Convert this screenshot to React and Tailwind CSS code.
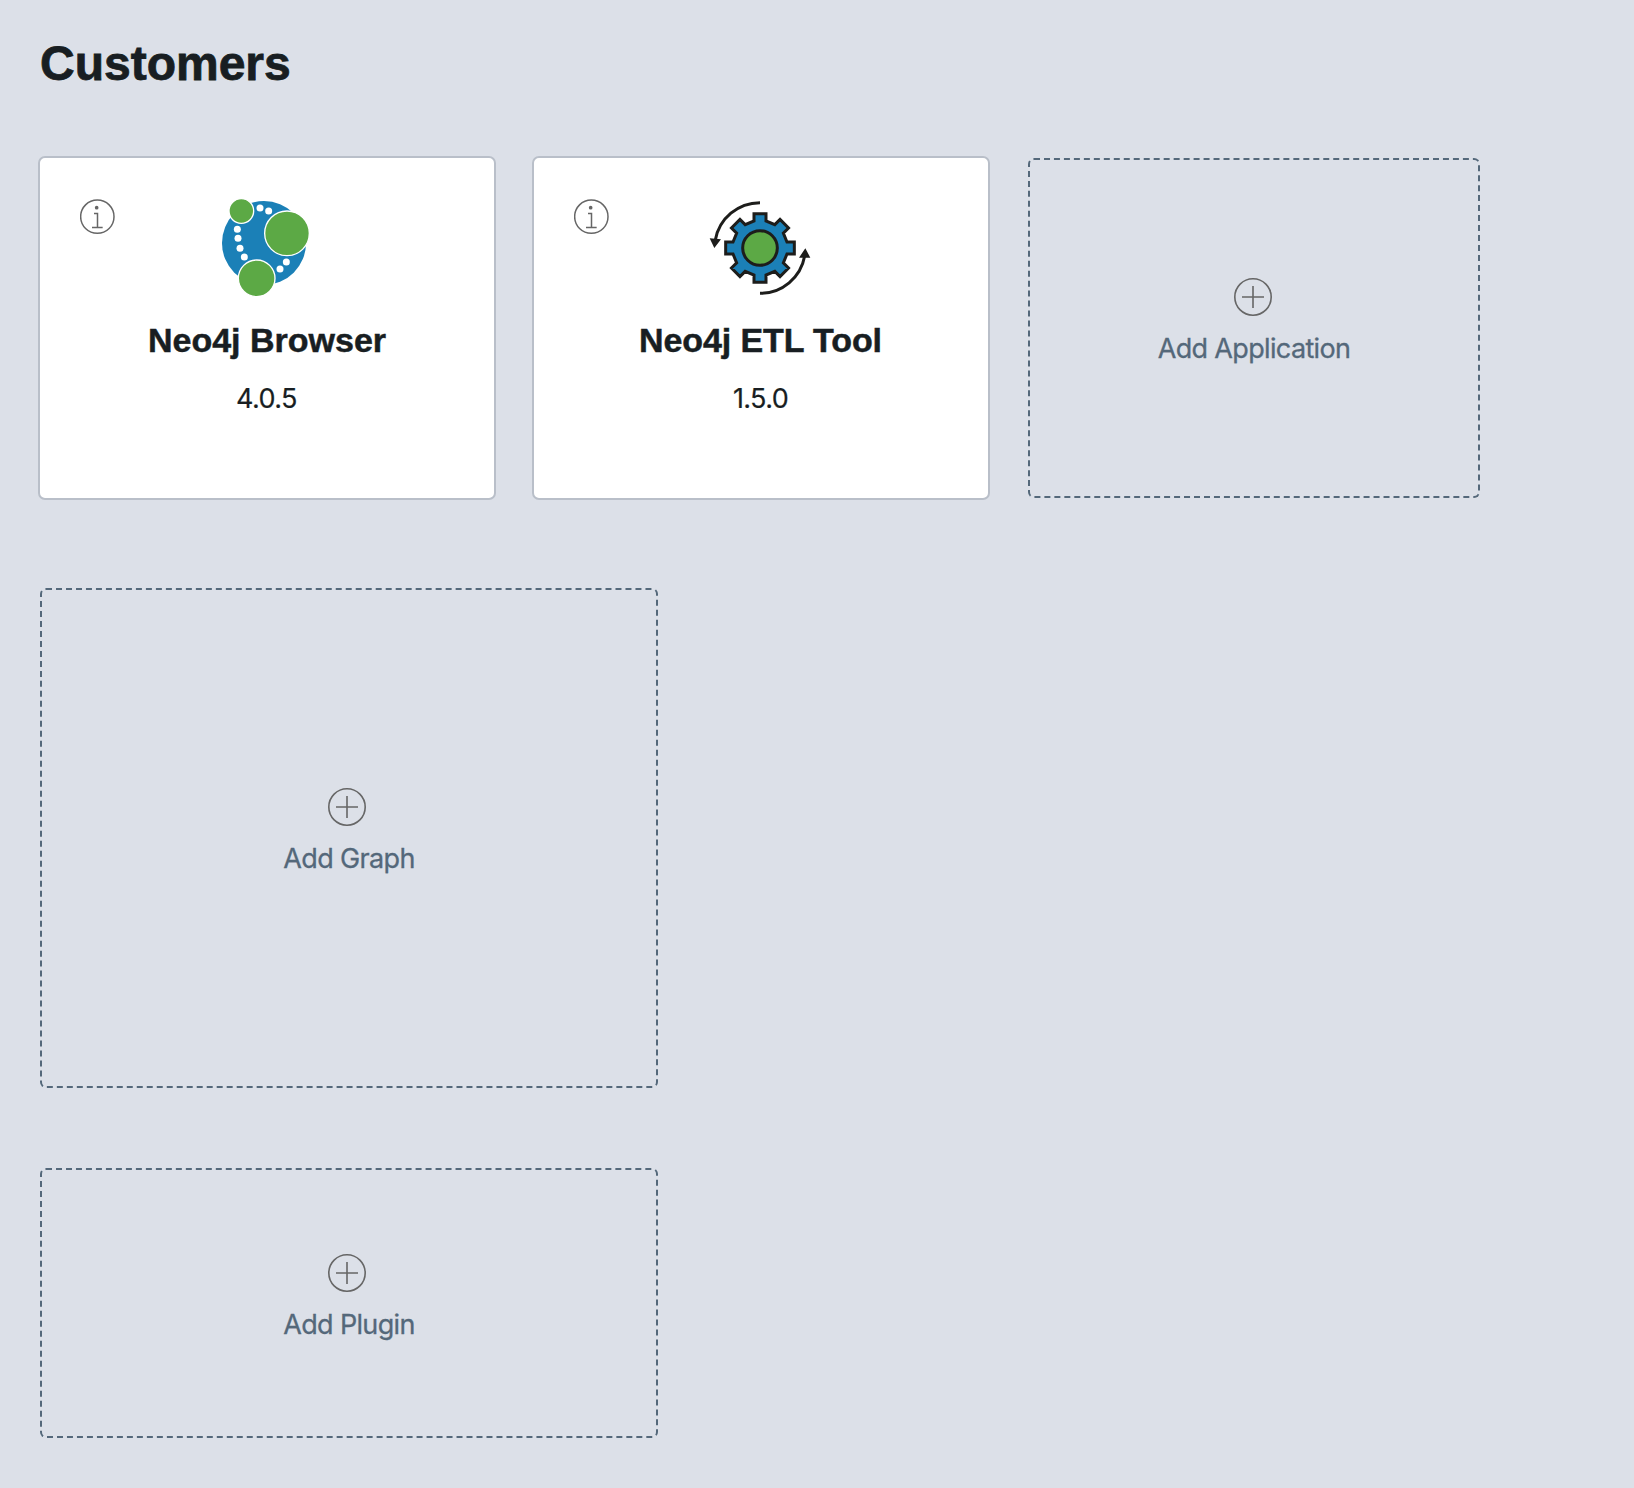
import React from "react";

function InfoIcon() {
  return (
    <svg className="absolute left-[40px] top-[41px] h-9 w-9" viewBox="0 0 108 108" fill="none" stroke="#666">
      <circle cx="52" cy="53" r="50" strokeWidth="4.5" />
      <circle cx="50" cy="26" r="5.5" fill="#666" stroke="none" />
      <path d="M42 43.5H52.5V85.5M36 85.5H68" strokeWidth="4.5" />
    </svg>
  );
}

function BrowserLogo() {
  const dots = [[150, 54], [176, 63], [82, 118], [84, 145], [90, 175], [103, 201], [229, 216], [210, 237]];
  return (
    <svg className="h-[102px] w-[100px]" viewBox="21 18 300 306">
      <circle cx="162" cy="159" r="126" fill="#1b80b7" />
      <g fill="#5ca945" stroke="#fff" strokeWidth="4">
        <circle cx="94" cy="63" r="37" />
        <circle cx="231" cy="130" r="67" />
        <circle cx="140" cy="265" r="55" />
      </g>
      {dots.map(([x, y]) => (
        <circle key={x} cx={x} cy={y} r="10.5" fill="#fff" />
      ))}
    </svg>
  );
}

function EtlLogo() {
  const points = [];
  for (let i = 0; i < 8; i++) {
    const a = (i * Math.PI) / 4;
    for (const [x, y] of [[-18, -81], [-18, -103], [18, -103], [18, -81]]) {
      points.push(
        `${(180 + x * Math.cos(a) - y * Math.sin(a)).toFixed(1)},${(174 + x * Math.sin(a) + y * Math.cos(a)).toFixed(1)}`
      );
    }
  }
  return (
    <svg className="h-[102px] w-[104px]" viewBox="27 18 312 306">
      <polygon points={points.join(" ")} fill="#1b80b7" stroke="#1d1d1b" strokeWidth="9" />
      <circle cx="180" cy="174" r="52" fill="#5ca945" stroke="#1d1d1b" strokeWidth="9" />
      <path d="M180 38A136 136 0 0 0 46 150M180 310A136 136 0 0 0 314 198" fill="none" stroke="#1d1d1b" strokeWidth="9" />
      <path d="M43 174L29 145L63 148ZM316 175L331 203L297 203Z" fill="#1d1d1b" />
    </svg>
  );
}

function AppCard({ logo, name, version, nameClass }) {
  return (
    <article className="relative flex h-[344px] w-[458px] flex-col items-center rounded-[7px] border-2 border-[#b9bfc9] bg-white pt-[38px]">
      <InfoIcon />
      {logo}
      <h2 className={`mt-[22px] font-['Liberation_Sans',sans-serif] text-[34px] leading-[40px] font-bold whitespace-nowrap [-webkit-text-stroke:0.5px_#181e22] ${nameClass}`}>{name}</h2>
      <p className="mt-[23px] mr-px text-[27px] leading-8 tracking-[-0.6px] whitespace-nowrap [-webkit-text-stroke:0.2px_#181e22]">{version}</p>
    </article>
  );
}

function AddTile({ label, className, iconClass }) {
  return (
    <button className={`flex flex-col items-center rounded-[6px] border-2 border-dashed border-[#54687a] text-[#54687a] ${className}`}>
      <svg className={`h-[38px] w-[38px] shrink-0 ${iconClass}`} viewBox="0 0 38 38" fill="none" stroke="#666" strokeWidth="1.6">
        <circle cx="19" cy="19" r="18.2" />
        <path d="M8 19H30M19 8V30" />
      </svg>
      <span className="mt-[17px] text-[27px] leading-8 tracking-[-0.65px] whitespace-nowrap [-webkit-text-stroke:0.3px_#54687a]">{label}</span>
    </button>
  );
}

export default function App() {
  return (
    <main className="min-h-[1488px] bg-[#dce0e8] pt-[37px] pl-[38px] font-['Inter',sans-serif] text-[#181e22]">
      <h1 className="ml-[2px] font-['Liberation_Sans',sans-serif] text-[48px] leading-[54px] font-bold [-webkit-text-stroke:0.8px_#181e22]">Customers</h1>
      <section className="mt-[65px] flex items-start">
        <AppCard logo={<BrowserLogo />} name="Neo4j Browser" version="4.0.5" nameClass="" />
        <div className="w-9" />
        <AppCard logo={<EtlLogo />} name="Neo4j ETL Tool" version="1.5.0" nameClass="tracking-[-0.1px] mr-px" />
        <AddTile label="Add Application" className="mt-[2px] ml-[38px] h-[340px] w-[452px] pt-[118px]" iconClass="mr-[2px]" />
      </section>
      <section className="mt-[88px] ml-[2px] flex flex-col gap-20">
        <AddTile label="Add Graph" className="h-[500px] w-[618px] pt-[198px]" iconClass="mr-[4px]" />
        <AddTile label="Add Plugin" className="h-[270px] w-[618px] pt-[84px]" iconClass="mr-[4px]" />
      </section>
    </main>
  );
}
